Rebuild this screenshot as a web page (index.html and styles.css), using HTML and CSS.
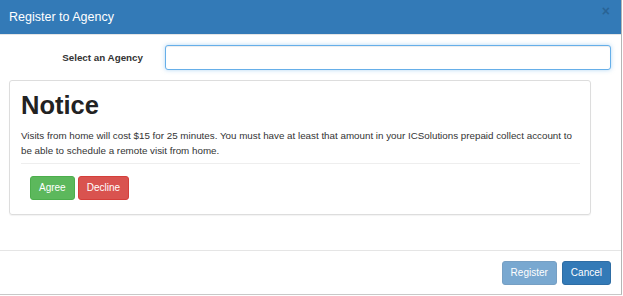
FILE: index.html
```html
<!DOCTYPE html>
<html>
<head>
<meta charset="utf-8">
<link rel="stylesheet" href="styles.css">
</head>
<body>
<div class="modal">
  <div class="modal-header">
    <h4 class="modal-title">Register to Agency</h4>
    <span class="close">×</span>
  </div>
  <div class="modal-body">
    <div class="form-row">
      <label class="form-label">Select an Agency</label>
      <input class="form-input" type="text">
    </div>
    <div class="notice">
      <h1 class="notice-title">Notice</h1>
      <p class="notice-text">Visits from home will cost $15 for 25 minutes. You must have at least that amount in your ICSolutions prepaid collect account to be able to schedule a remote visit from home.</p>
      <hr class="notice-rule">
      <div class="notice-actions">
        <button class="btn btn-success">Agree</button>
        <button class="btn btn-danger">Decline</button>
      </div>
    </div>
  </div>
  <div class="modal-footer">
    <button class="btn btn-primary btn-disabled">Register</button>
    <button class="btn btn-primary">Cancel</button>
  </div>
</div>
</body>
</html>
```
FILE: styles.css
```css
html, body {
  margin: 0;
  padding: 0;
  background: #fff;
}
body {
  font-family: "Liberation Sans", Arial, sans-serif;
  color: #333;
  font-size: 9.8px;
  line-height: 15px;
}
.modal {
  width: 622px;
  height: 295px;
  box-sizing: border-box;
  border-right: 1px solid #b5b5b5;
  border-bottom: 1px solid #c8c8c8;
  display: flex;
  flex-direction: column;
}
.modal-header {
  height: 34px;
  background: #337ab7;
  display: flex;
  align-items: center;
  justify-content: space-between;
  padding: 0 11px 0 9px;
  border-bottom: 1px solid #e5e5e5;
  flex-shrink: 0;
}
.modal-title {
  margin: 0;
  color: #fff;
  font-size: 12.5px;
  font-weight: normal;
  line-height: 18px;
}
.close {
  color: #000;
  opacity: 0.18;
  font-weight: bold;
  font-size: 14px;
  line-height: 14px;
  margin-top: -12px;
}
.modal-body {
  padding: 10px 0 0 9px;
  flex: 1;
}
.form-row {
  display: flex;
  align-items: center;
  height: 24px;
}
.form-label {
  text-align: right;
  font-weight: bold;
  padding-right: 22px;
  box-sizing: border-box;
  width: 156px;
  font-size: 9.8px;
}
.form-input {
  width: 446px;
  height: 25px;
  box-sizing: border-box;
  border: 1px solid #66afe9;
  border-radius: 3px;
  box-shadow: inset 0 1px 1px rgba(0,0,0,.075), 0 0 4px rgba(102,175,233,.5);
  outline: none;
  margin: 0;
  padding: 0 9px;
}
.notice {
  margin-top: 11px;
  width: 582px;
  height: 135px;
  box-sizing: border-box;
  border: 1px solid #ddd;
  border-radius: 3px;
  box-shadow: 0 1px 1px rgba(0,0,0,.05);
  padding: 9px 10px 0 11px;
}
.notice-title {
  margin: 0;
  font-size: 25.5px;
  line-height: 30px;
  font-weight: bold;
  color: #222;
}
.notice-text {
  margin: 8px 0 0 0;
}
.notice-rule {
  border: 0;
  border-top: 1px solid #eee;
  margin: 5px 0 12px 0;
}
.notice-actions {
  padding-left: 9px;
  display: flex;
  gap: 3px;
}
.btn {
  font-family: "Liberation Sans", Arial, sans-serif;
  font-size: 10px;
  line-height: 14px;
  padding: 4px 8px;
  border: 1px solid transparent;
  border-radius: 3px;
  color: #fff;
  margin: 0;
}
.btn-success {
  background: #5cb85c;
  border-color: #4cae4c;
}
.btn-danger {
  background: #d9534f;
  border-color: #d43f3a;
}
.btn-primary {
  background: #337ab7;
  border-color: #2e6da4;
}
.btn-disabled {
  opacity: 0.65;
}
.modal-footer {
  border-top: 1px solid #e5e5e5;
  height: 44px;
  box-sizing: border-box;
  display: flex;
  justify-content: flex-end;
  align-items: flex-start;
  gap: 5px;
  padding: 10px 10px 0 0;
  flex-shrink: 0;
}
```
